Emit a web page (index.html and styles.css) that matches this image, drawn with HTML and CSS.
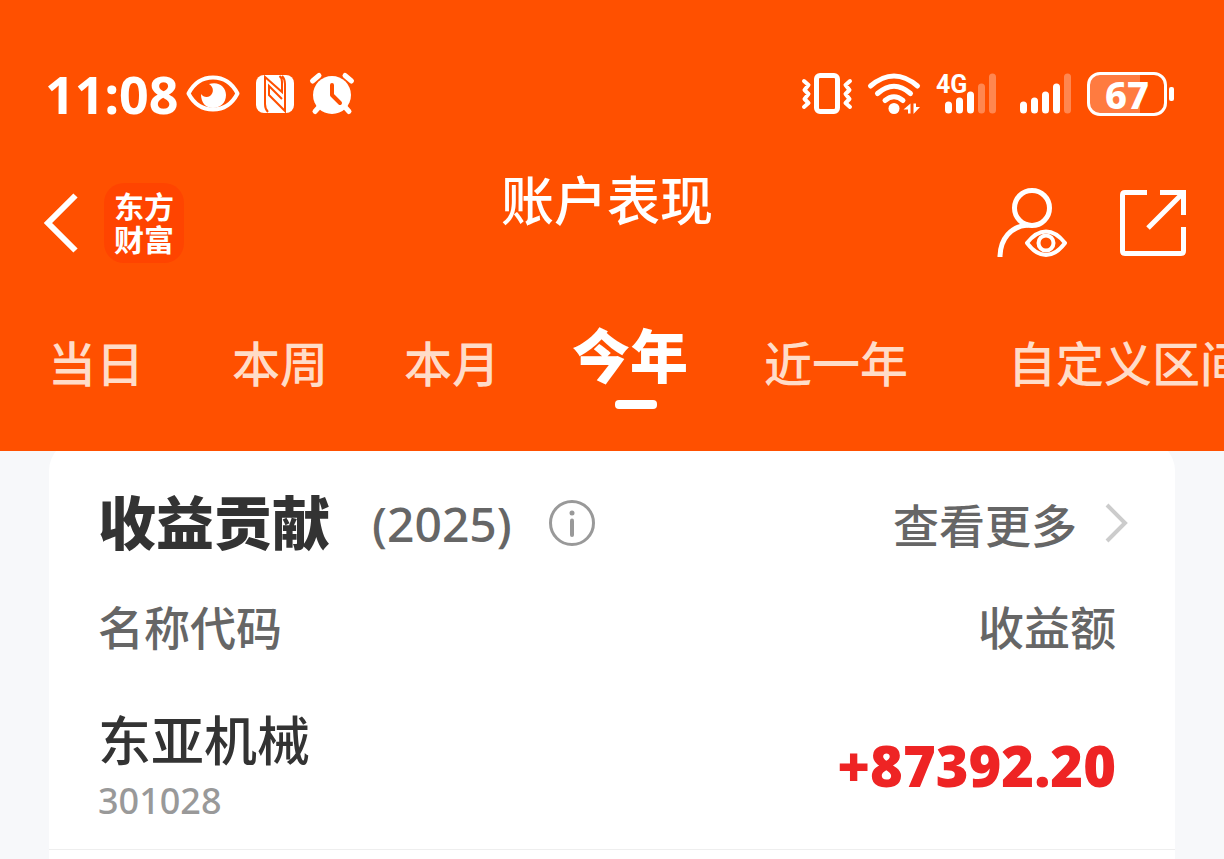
FILE: index.html
```html
<!DOCTYPE html>
<html lang="zh-CN">
<head>
<meta charset="utf-8">
<meta name="viewport" content="width=device-width, initial-scale=1">
<title>账户表现</title>
<link rel="stylesheet" href="styles.css">
</head>
<body>
<header class="header">
  <div class="status">
    <div class="status-side">
      <span class="time">11:08</span>
      <svg class="eye" width="54" height="40" viewBox="0 0 54 40" aria-hidden="true">
        <path d="M2.500 19.500C8 9 17 3.500 27 3.500S46 9 51.500 19.500C46 30 37 35.500 27 35.500S8 30 2.500 19.500Z" fill="none" stroke="#fff" stroke-width="4" stroke-linejoin="round"/>
        <path d="M23 10C33 7 40 13 40 21C40 29 34 34 27 34C20 34 15 29 15 20C17 23 21 24 24 22C28 19 28 13 23 10Z" fill="#fff"/>
      </svg>
      <svg class="nfc" width="38" height="40" viewBox="0 0 38 40" aria-hidden="true">
        <rect x="0" y="1" width="38" height="38" rx="8" fill="#fff"/>
        <path d="M12 38Q9 35 9 30V3L26 18V8Q26 4 23.500 2M26 2Q29 5 29 10V37L13 21V12L26 25" fill="none" stroke="#ff5000" stroke-width="2"/>
      </svg>
      <svg class="alarm" width="44" height="42" viewBox="0 0 44 42" aria-hidden="true">
        <path d="M2.500 8L9 2.500M41.500 8L35 2.500M9 34L5 38.500M35 34L39 38.500" stroke="#fff" stroke-width="5" stroke-linecap="round"/>
        <circle cx="22" cy="22" r="19" fill="#fff"/>
        <path d="M22 12V22L30 30" fill="none" stroke="#ff5000" stroke-width="4" stroke-linecap="round" stroke-linejoin="round"/>
      </svg>
    </div>
    <div class="status-side">
      <svg class="vibrate" width="50" height="42" viewBox="0 0 50 42" aria-hidden="true">
        <rect x="14.500" y="2.500" width="21" height="36" rx="3.500" fill="none" stroke="#fff" stroke-width="5"/>
        <path d="M2 8L6.500 12L2.500 17L6.500 21L2.500 26L6.500 30L2 34M48 8L43.500 12L47.500 17L43.500 21L47.500 26L43.500 30L48 34" fill="none" stroke="#fff" stroke-width="4" stroke-linecap="round" stroke-linejoin="round"/>
      </svg>
      <svg class="wifi" width="52" height="42" viewBox="0 0 52 42" aria-hidden="true">
        <path d="M2.500 13Q26-7 49.500 13M9.500 20.500Q26 6 42.500 20.500M17 27.500Q26 20 35 27.500" fill="none" stroke="#fff" stroke-width="5" stroke-linecap="round"/>
        <circle cx="26" cy="35.500" r="5.500" fill="#fff"/>
        <path d="M42.500 30.500V40.500H40V36.500H35.500ZM45.500 41V30.500H48V34H52Z" fill="#fff"/>
      </svg>
      <svg class="mobile" width="60" height="44" viewBox="0 0 60 44" role="img" aria-label="4G">
        <text class="network" x="0" y="21">4G</text>
        <path d="M12.500 33V38M23.500 29V38M34.500 23V38" stroke="#fff" stroke-width="7" stroke-linecap="round"/>
        <path d="M45.500 15V38M56.500 5V38" stroke="#ff8750" stroke-width="7" stroke-linecap="round"/>
      </svg>
      <svg class="signal" width="51" height="44" viewBox="0 0 51 44" aria-hidden="true">
        <path d="M3.500 33V38M14.500 29V38M25.500 23V38M36.500 15V38" stroke="#fff" stroke-width="7" stroke-linecap="round"/>
        <path d="M47.500 5V38" stroke="#ff8750" stroke-width="7" stroke-linecap="round"/>
      </svg>
      <div class="battery"><span class="battery-level">67</span></div>
    </div>
  </div>

  <nav class="nav">
    <div class="nav-left">
      <button class="icon-button" type="button" aria-label="返回">
        <svg width="34" height="60" viewBox="0 0 34 60" aria-hidden="true"><path d="M31.500 2.500L4 30L31.500 57.500" fill="none" stroke="#fff" stroke-width="6"/></svg>
      </button>
      <div class="logo">东方财富</div>
    </div>
    <h1 class="title">账户表现</h1>
    <div class="nav-right">
      <button class="icon-button" type="button" aria-label="账户查看">
        <svg width="72" height="70" viewBox="0 0 72 70" aria-hidden="true">
          <g fill="none" stroke="#fff" stroke-width="5">
            <circle cx="36" cy="20" r="17.500"/>
            <path d="M4 69C4 51 15 38 32 37"/>
            <path d="M31 55Q40 43.500 50 43.500T69 55Q60 67 50 67T31 55Z" stroke-width="4" stroke-linejoin="round"/>
            <circle cx="50" cy="55" r="7.500" stroke-width="4"/>
          </g>
        </svg>
      </button>
      <button class="icon-button" type="button" aria-label="分享">
        <svg width="66" height="66" viewBox="0 0 66 66" aria-hidden="true">
          <path d="M27 2.500H5Q2.500 2.500 2.500 5V61Q2.500 63.500 5 63.500H61Q63.500 63.500 63.500 61V37M40 2.500H63.500V25M63 3L28 38" fill="none" stroke="#fff" stroke-width="5"/>
        </svg>
      </button>
    </div>
  </nav>

  <div class="tabs">
    <button class="tab" type="button">当日</button>
    <button class="tab" type="button">本周</button>
    <button class="tab" type="button">本月</button>
    <button class="tab tab-active" type="button" aria-current="true">今年</button>
    <button class="tab" type="button">近一年</button>
    <button class="tab tab-custom" type="button">自定义区间</button>
  </div>
</header>

<main class="card">
  <div class="card-head">
    <h2 class="card-title">收益贡献</h2>
    <span class="year">(2025)</span>
    <button class="icon-button" type="button" aria-label="说明">
      <svg width="48" height="48" viewBox="0 0 48 48" aria-hidden="true">
        <circle cx="24" cy="24" r="21.500" fill="none" stroke="#999" stroke-width="3"/>
        <circle cx="24" cy="14" r="2.500" fill="#999"/>
        <path d="M24 21.500V36" stroke="#999" stroke-width="4" stroke-linecap="round"/>
      </svg>
    </button>
    <a class="more" href="#more">查看更多
      <svg width="24" height="40" viewBox="0 0 24 40" aria-hidden="true"><path d="M2 2L20 20L2 38" fill="none" stroke="#ccc" stroke-width="4"/></svg>
    </a>
  </div>
  <table class="table">
    <thead>
      <tr><th scope="col">名称代码</th><th class="right" scope="col">收益额</th></tr>
    </thead>
    <tbody>
      <tr>
        <td><div class="name">东亚机械</div><div class="code">301028</div></td>
        <td class="right amount">+87392.20</td>
      </tr>
    </tbody>
  </table>
</main>
</body>
</html>
```
FILE: styles.css
```css
* {
  box-sizing: border-box;
}

body {
  margin: 0;
  min-height: 100vh;
  display: flex;
  flex-direction: column;
  overflow-x: hidden;
  background: #f7f8fa;
  color: #333;
  font-family: "Noto Sans", "Noto Sans CJK SC", sans-serif;
}

button {
  margin: 0;
  padding: 0;
  border: 0;
  background: none;
  color: inherit;
  font: inherit;
}

svg {
  display: block;
  overflow: visible;
}

.header {
  position: relative;
  z-index: 1;
  padding: 70px 0 42px;
  overflow: hidden;
  background: #ff5000;
  color: #fff;
}

/* Status bar */
.status {
  display: flex;
  justify-content: space-between;
  height: 48px;
  padding: 0 57px 0 45px;
}

.status-side {
  display: flex;
  align-items: center;
}

.time {
  font-size: 52px;
  font-weight: 700;
  line-height: 48px;
}

.eye {
  margin-left: 7px;
}

.nfc,
.alarm,
.wifi,
.mobile,
.battery {
  margin-left: 16px;
}

.signal {
  margin-left: 24px;
}

.network {
  fill: #fff;
  font-family: Roboto, sans-serif;
  font-size: 25px;
  font-weight: 700;
}

.battery {
  position: relative;
  width: 80px;
  height: 44px;
  border: 3px solid #fff;
  border-radius: 13px;
  background: linear-gradient(90deg, #ff7b40 68%, #ff5000 68%);
  text-align: center;
}

.battery::after {
  content: "";
  position: absolute;
  top: 12px;
  right: -10px;
  width: 5px;
  height: 14px;
  border-radius: 2px;
  background: #fff;
}

.battery-level {
  display: block;
  font-size: 38px;
  font-weight: 800;
  line-height: 38px;
}

/* Navigation */
.nav {
  display: grid;
  grid-template-columns: 1fr auto 1fr;
  align-items: center;
  height: 104px;
  margin-top: 53px;
  padding: 0 38px 0 28px;
}

.nav-left {
  display: flex;
  align-items: center;
  gap: 26px;
  padding-left: 16px;
}

.logo {
  width: 80px;
  height: 80px;
  padding: 7px 10px;
  border-radius: 20px;
  background: #ff4400;
  font-size: 30px;
  font-weight: 700;
  line-height: 33px;
}

.title {
  align-self: start;
  margin: 0;
  font-size: 53px;
  font-weight: 500;
  line-height: 60px;
}

.nav-right {
  display: flex;
  align-items: center;
  justify-content: flex-end;
  gap: 52px;
}

/* Period tabs */
.tabs {
  display: flex;
  align-items: flex-start;
  gap: 76px;
  margin-top: 51px;
  padding-left: 48px;
}

.tab {
  flex: none;
  color: #ffdcc8;
  font-size: 48px;
  font-weight: 500;
  line-height: 76px;
}

.tab:first-child {
  margin-right: 12px;
}

.tab-active {
  display: flex;
  flex-direction: column;
  align-items: center;
  margin-left: -4px;
  color: #fff;
  font-size: 58px;
  font-weight: 900;
  line-height: 60px;
}

.tab-active::after {
  content: "";
  width: 42px;
  height: 9px;
  margin: 14px 0 0 12px;
  border-radius: 4px;
  background: #fff;
}

.tab-custom {
  margin-left: 24px;
}

/* Contribution card */
.card {
  flex: 1;
  margin: -12px 49px 0;
  padding-top: 48px;
  border-radius: 32px 32px 0 0;
  background: #fff;
}

.card-head {
  display: flex;
  align-items: center;
  height: 72px;
  padding: 0 46px 0 49px;
}

.card-title {
  margin: 0;
  font-size: 58px;
  font-weight: 900;
  line-height: 76px;
}

.year {
  margin: 0 36px 0 42px;
  color: #666;
  font-size: 48px;
  font-weight: 500;
}

.more {
  display: flex;
  align-items: center;
  gap: 28px;
  margin-left: auto;
  color: #666;
  font-size: 46px;
  font-weight: 500;
  text-decoration: none;
}

.table {
  width: 100%;
  margin-top: 32px;
  border-collapse: collapse;
}

.table th,
.table td {
  padding: 0 59px 0 49px;
  text-align: left;
}

.table th {
  height: 72px;
  color: #666;
  font-size: 46px;
  font-weight: 500;
  line-height: 72px;
}

.table td {
  padding-top: 42px;
  padding-bottom: 24px;
  border-bottom: 1px solid #eee;
}

.table .right {
  text-align: right;
}

.name {
  font-size: 53px;
  font-weight: 500;
  line-height: 72px;
}

.code {
  color: #999;
  font-size: 36px;
  font-weight: 500;
  line-height: 48px;
}

.table .amount {
  color: #ee2424;
  font-size: 56px;
  font-weight: 900;
}
```
